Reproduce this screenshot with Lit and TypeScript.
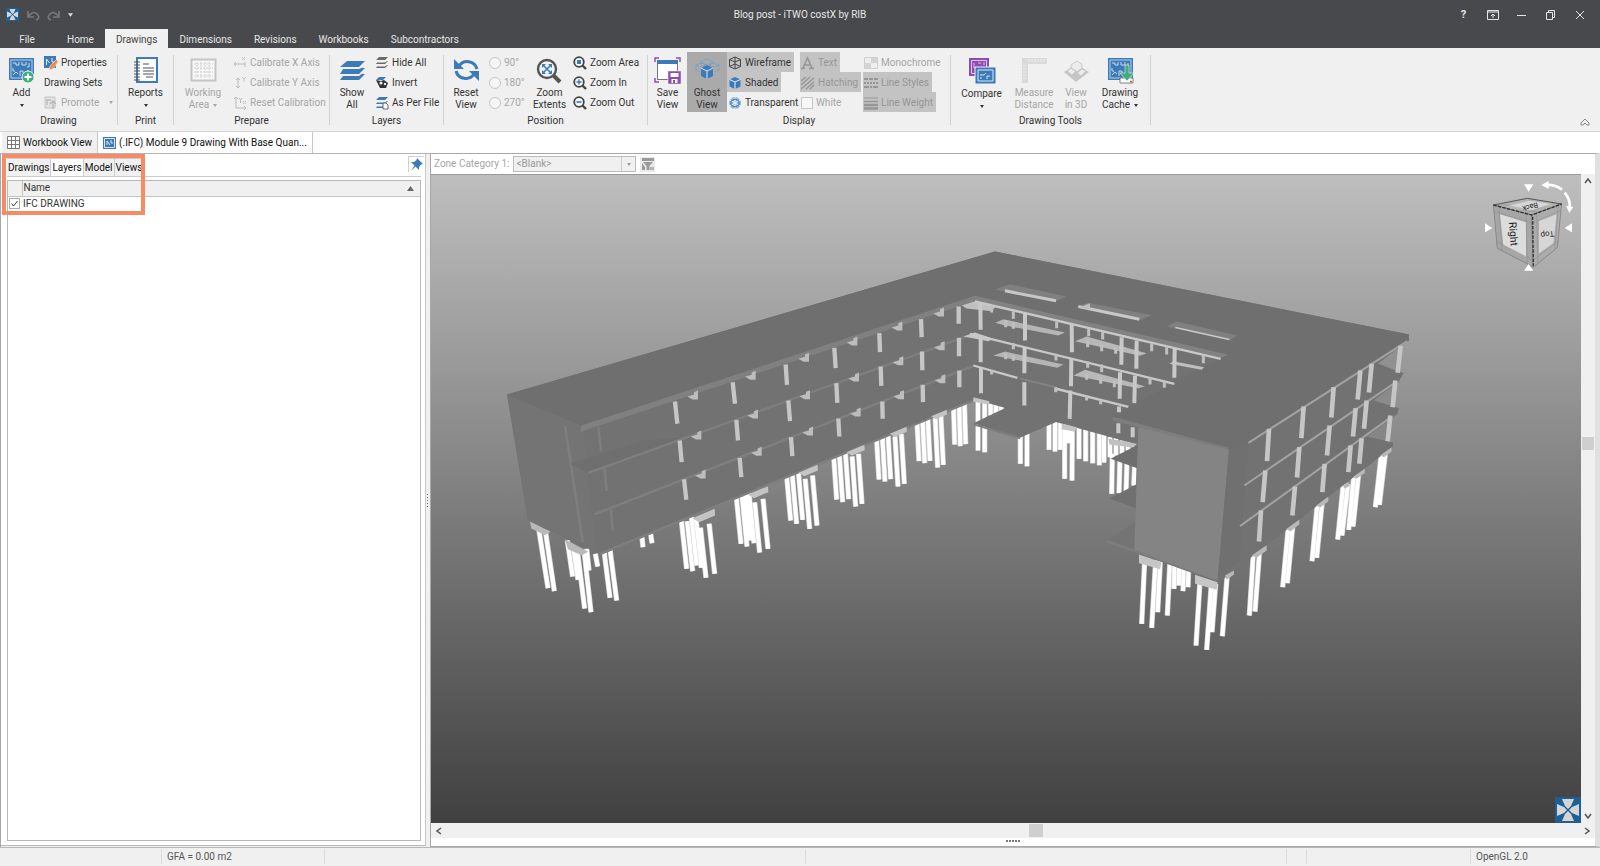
import { LitElement, html, svg, css } from "lit";
import { customElement, state } from "lit/decorators.js";
import { classMap } from "lit/directives/class-map.js";

const BLUE = "#3d7ab8";

/* ---------- icons ---------- */
const icon = (size: number, body: unknown, w = size) =>
  html`<svg class="ico" width=${w} height=${size} viewBox="0 0 ${w} ${size}" aria-hidden="true">${body}</svg>`;

const circuit = (c: string) => svg`<rect x="1" y="1" width="25" height="22" fill=${c}/><rect x="3" y="3" width="21" height="18" fill="none" stroke="#b5cfe8" stroke-width="1"/>
  <path d="M5 6h3v2h3V5M14 5v3h4V5M21 6v4h-2M5 11v3h2M5 18l3-3 2 2M12 19v-5h3v2M20 13v4" fill="none" stroke="#c9dcef" stroke-width="1"/>`;

const layers = (c: string) => svg`<path d="M8 1h18l-6 6H1z" fill=${c}/><path d="M4 9L1 14h19l6-6-3-.2L20 9zM4 16l-3 4h19l6-6-3-.2-3 2.200z" fill=${c}/>`;
const layersSm = (c: string) => svg`<path d="M4 1h9l-3 3H1zM2 6.500L1 8h9l3-3h-1l-2 1.500zM2 10.500L1 12h9l3-3h-1l-2 1.500z" fill=${c}/>`;
const lens = (body: unknown) => svg`<circle cx="6" cy="6" r="4.800" fill="#f4f8fc" stroke="#444" stroke-width="1.800"/><path d="M9.500 9.500L13 13" stroke="#444" stroke-width="2.400"/>${body}`;
const cubeSm = (c: string) => svg`<path d="M7 1l5.500 2.500v7L7 13l-5.500-2.500v-7z" fill=${c}/><path d="M1.500 3.500L7 6l5.500-2.500M7 6v7" fill="none" stroke="#e8f0f8" stroke-width="1"/>`;

const I = {
  add: icon(27, svg`${circuit(BLUE)}<circle cx="20" cy="20" r="6" fill="#3fae7c" stroke="#f0f0f0"/><path d="M20 16.500v7M16.500 20h7" stroke="#fff" stroke-width="1.800"/>`),
  reports: icon(27, svg`<rect x="5" y="1" width="20" height="24" fill="#fff" stroke=${BLUE} stroke-width="2"/><path d="M2 5h6M2 8h6M2 11h6M2 14h6M2 17h6M2 20h6M2 23h6" stroke="#555" stroke-width="1"/><path d="M11 7h6M11 11h11M11 14h11M11 17h11M14 20h7" stroke="#8a8a8a" stroke-width="1.300"/>`),
  area: icon(27, svg`<rect x="1.500" y="2.500" width="24" height="21" fill="#f7f7f7" stroke="#c4c4c4" stroke-width="2"/><path d="M4 7h19M4 11h19M4 15h19M4 19h19M7 5v16M11 5v16M15 5v16M19 5v16" stroke="#cfcfcf" stroke-dasharray="2 1"/>`),
  show: icon(27, svg`<g transform="translate(0 3)">${layers(BLUE)}</g>`),
  reset: icon(27, svg`<path d="M6 9a10 10 0 0 1 18 3M21 17a10 10 0 0 1-18-3" fill="none" stroke=${BLUE} stroke-width="3"/><path d="M1 2v10h10zM26 24V14H16z" fill=${BLUE}/>`),
  extents: icon(27, svg`<circle cx="11" cy="12" r="9" fill="#eef4fa" stroke="#555" stroke-width="2.400"/><path d="M17 18l7 7" stroke="#555" stroke-width="4"/><path d="M7 8l8 8M15 8l-8 8" stroke=${BLUE} stroke-width="1.600"/><path d="M6 7h4l-4 4zM16 7v4l-4-4zM6 17v-4l4 4zM16 17h-4l4-4z" fill=${BLUE}/>`),
  save: icon(27, svg`<path d="M1 5V1h4M22 1h4v4M1 21v4h4" fill="none" stroke="#8d4bb3" stroke-width="1.500"/><rect x="3.500" y="4.500" width="20" height="18" fill="#fff" stroke="#777"/><path d="M3 3h21v4H3z" fill=${BLUE}/><path d="M14 14h13v13H14z" fill="#8d4bb3" stroke="#f0f0f0" stroke-width=".5"/><path d="M16.500 16h8v4h-8zM17.500 22h6v4h-6z" fill="#fff"/><path d="M19 23h2v3h-2z" fill="#8d4bb3"/>`),
  ghost: icon(27, svg`<g fill="none" stroke="#6f9fce" stroke-width="1" stroke-dasharray="2 1"><path d="M13 2l7 3-7 3-7-3zM2 8l5-2 5 2-5 2zM15 8l5-2 5 2-5 2zM2 8v5l4 2M25 8v5l-4 2"/></g><path d="M13 8l6 3v8l-6 3-6-3v-8z" fill=${BLUE}/><path d="M7 11l6 3 6-3M13 14v8" stroke="#d9e8f6" fill="none"/>`),
  compare: icon(28, svg`<path d="M1 1h20v18H1z" fill="#8d4bb3"/><path d="M3.500 3.500h15v13h-15zM6 6v5h4M10 6h3M16 5v3" stroke="#dcc6ea" fill="none"/><path d="M7 10h21v17H7z" fill=${BLUE} stroke="#f0f0f0"/><path d="M10 13h15v11H10zM12 18h4l2-2M13 22v-2M19 22v-3h3" stroke="#dce9f5" fill="none"/>`),
  measure: icon(27, svg`<path d="M1 1h25v6H7v19H1z" fill="#dadada"/><path d="M8 2v3M11 2v3M14 2v3M17 2v3M20 2v3M23 2v3M2 9h3M2 12h3M2 15h3M2 18h3M2 21h3" stroke="#f0f0f0"/>`),
  view3d: icon(27, svg`<path d="M1 15l12-8 13 8-13 10z" fill="#c6c6c6"/><path d="M8 8l6-4 5 3v4l-5 4-6-4zM4 14l4-3 5 3-4 4zM14 16l5-4 4 2-5 5z" fill="#ececec" stroke="#c0c0c0" stroke-width=".8"/>`),
  cache: icon(27, svg`${circuit(BLUE)}<path d="M13 21h13v5H13z" fill="#fff" stroke="#666" stroke-width=".8"/><path d="M18 8h4v8h5l-7 8-7-8h5z" fill="#3fae7c" stroke="#f0f0f0" stroke-width=".6"/><path d="M23 24.500h2" stroke="#e0563a" stroke-width="1.500"/>`),
  props: icon(14, svg`<path d="M0 0h12v12H0z" fill=${BLUE}/><path d="M2.500 9V3l3 4M8 2v4h2" stroke="#dce9f5" fill="none"/><path d="M13 3l-7 7-1 4 4-1 5-7z" fill="#f08a4b" stroke="#fff" stroke-width=".5"/>`),
  promote: icon(14, svg`<path d="M1 1h10v11H1z" fill="#e2e2e2" stroke="#c4c4c4"/><path d="M3 9V4h4M9 13V6M6 8l3-3 3 3" stroke="#b8b8b8" fill="none" stroke-width="1.300"/>`),
  calx: icon(14, svg`<path d="M1 8h11M1 8l2-2M1 8l2 2M12 6v5" stroke="#bbb" fill="none"/><path d="M9 1l3 3M12 1L9 4" stroke="#c4c4c4"/>`),
  caly: icon(14, svg`<path d="M5 2v10M3 4l2-2 2 2M3 10l2 2 2-2" stroke="#bbb" fill="none"/><path d="M9 1l2 2 2-2M11 3v3" stroke="#c4c4c4" fill="none"/>`),
  calr: icon(14, svg`<path d="M3 1v11h10M1 3l2-2 2 2M11 10l2 2-2 2M6 2l1.500 2L9 2M7.500 4v3" stroke="#bbb" fill="none"/><path d="M10 5l3 3M13 5l-3 3" stroke="#c4c4c4"/>`),
  hide: icon(14, layersSm("#6a6a6a")),
  invert: icon(14, svg`<path d="M4 1h7l-3 3H1z" fill=${BLUE}/><path d="M1 4l5 1 3-1 4 3-2 5H5L3 8z" fill="#333"/><circle cx="6" cy="7" r="1.600" fill="#eee"/><circle cx="10" cy="8" r="1.200" fill="#eee"/>`),
  perfile: icon(14, svg`${layersSm(BLUE)}<path d="M8 7h3l2 2v4H8z" fill="#fff" stroke="#666"/>`),
  zarea: icon(14, lens(svg`<rect x="4" y="4" width="4" height="4" fill=${BLUE}/>`)),
  zin: icon(14, lens(svg`<path d="M6 3.500v5M3.500 6h5" stroke=${BLUE} stroke-width="1.400"/>`)),
  zout: icon(14, lens(svg`<path d="M3.500 6h5" stroke=${BLUE} stroke-width="1.600"/>`)),
  wire: icon(14, svg`<path d="M7 1l5.500 2.500v7L7 13l-5.500-2.500v-7zM1.500 3.500L7 6l5.500-2.500M7 1v12M1.500 10.500L7 8l5.500 2.500" fill="none" stroke="#444" stroke-width="1"/>`),
  shaded: icon(14, cubeSm(BLUE)),
  transp: icon(14, svg`<circle cx="7" cy="7" r="6" fill="#8fb8dc"/><path d="M7 1v12M2 4l10 6M12 4L2 10" stroke="#eef5fb"/><path d="M7 3l4 2v4l-4 2-4-2V5z" fill="none" stroke=${BLUE}/>`),
  text: icon(14, svg`<path d="M0 12.500h4M8 12.500h5M2 12L6.500 2 11 12M4 9h6" stroke="#969696" stroke-width="1.600" fill="none"/>`),
  hatch: icon(14, svg`<path d="M0 5l5-4M0 9l9-8M0 13L13 2M5 13l8-7M9 13l4-4" stroke="#969696" stroke-width="1.400"/>`),
  mono: icon(14, svg`<path d="M.5 1.500h13v11H.5z" fill="#eee" stroke="#cfcfcf"/><path d="M1 7h6v5H1zM7 2h6v5H7z" fill="#d3d3d3"/>`),
  lstyle: icon(14, svg`<path d="M0 3h14" stroke="#969696" stroke-width="2" stroke-dasharray="4 1"/><path d="M0 7h14" stroke="#969696" stroke-width="2" stroke-dasharray="2 1"/><path d="M0 11h14" stroke="#969696" stroke-width="2" stroke-dasharray="5 1 2 1"/>`),
  lweight: icon(14, svg`<path d="M0 2h14" stroke="#969696"/><path d="M0 5.500h14" stroke="#969696" stroke-width="1.500"/><path d="M0 9h14M0 12.500h14" stroke="#969696" stroke-width="2.400"/>`),
};

const logo = (s: number) => html`<svg width=${s} height=${s} viewBox="0 0 26 26" aria-hidden="true"><rect width="26" height="26" fill="#1f5f92"/>
  <path d="M7 2h12l-3 7-3 3-3-3zM7 24h12l-3-7-3-3-3 3zM2 7v12l7-3 3-3-3-3zM24 7v12l-7-3-3-3 3-3z" fill="#d3d6d9"/></svg>`;

/* ---------- building model ---------- */
type Seg = [number, number, number, number];
const lines = (s: Seg[], color: string, w: number) =>
  svg`<path d=${s.map(([a, b, c, d]) => `M${a} ${b}L${c} ${d}`).join("")} stroke=${color} stroke-width=${w} fill="none"/>`;
const piles = (s: Seg[]) => svg`${lines(s, "#cfcfcf", 16)}${lines(s, "#fff", 12)}`;
const poly = (p: string, c: string) => svg`<polygon points=${p} fill=${c}/>`;

const pileFeet: [number, [number, number][]][] = [
  [0.11, [[590, 985], [608, 992], [620, 975], [634, 982], [648, 1012], [674, 1000]]],
  [0.1, [[753, 910], [771, 918], [780, 900], [792, 908], [809, 936], [834, 925]]],
  [0.09, [[902, 840], [920, 850], [938, 838], [959, 865], [981, 855]]],
  [0.07, [[1040, 777], [1058, 785], [1076, 776], [1097, 798], [1116, 790]]],
  [0.06, [[1167, 717], [1185, 723], [1202, 716], [1224, 738], [1243, 730]]],
  [0.05, [[1287, 662], [1304, 668], [1320, 661], [1343, 681], [1360, 673]]],
  [0.03, [[1394, 612], [1411, 617], [1427, 611]]],
];
const wingPiles: Seg[] = pileFeet.flatMap(([lean, feet]) =>
  feet.map(([x, y]): Seg => [x - lean * 150, y - 150, x, y]));
const endPiles: Seg[] = [
  [147, 870, 174, 1043], [166, 870, 193, 1052], [232, 900, 248, 1008], [250, 920, 264, 1018], [262, 930, 284, 1104], [282, 930, 303, 1115],
  [290, 925, 297, 990], [342, 930, 360, 1072], [359, 920, 380, 1080], [316, 940, 323, 978], [456, 890, 459, 920], [482, 880, 486, 908],
];
const wingColumns: Seg[] = [
  [555, 483, 562, 550], [728, 425, 735, 490], [887, 372, 891, 433], [1033, 322, 1037, 383], [1168, 278, 1170, 335], [1293, 236, 1295, 290], [1406, 198, 1406, 250],
  [569, 600, 575, 665], [739, 538, 744, 600], [895, 480, 900, 542], [1039, 428, 1042, 487], [1172, 378, 1174, 436], [1296, 333, 1297, 389], [1407, 292, 1407, 347],
  [582, 716, 589, 778], [749, 652, 754, 710], [903, 590, 907, 647], [1045, 534, 1048, 588], [1177, 483, 1178, 535], [1298, 433, 1299, 485], [1408, 390, 1408, 440],
];
const brackets: [number, number][] = [
  [612, 465], [785, 406], [945, 352], [1090, 303], [1225, 258], [1350, 216], [622, 585], [792, 522], [948, 464], [1095, 411], [1228, 362], [1352, 317],
  [635, 702], [803, 634], [957, 573], [1100, 516], [1230, 464], [1354, 416],
];
const wingCaps: [number, number, number][] = [[645, 825, 1], [808, 755, 0.9], [958, 690, 0.85], [1100, 629, 0.8], [1228, 574, 0.75], [1350, 522, 0.7]];

const courtPiles: Seg[] = [
  [174, 470, 174, 630], [194, 480, 194, 635], [212, 480, 212, 525], [228, 480, 228, 518], [244, 485, 244, 512], [301, 580, 301, 670], [321, 570, 321, 677],
  [387, 540, 387, 628], [405, 540, 405, 633], [421, 540, 421, 628], [434, 550, 434, 715], [446, 550, 446, 608], [457, 560, 456, 720],
  [477, 560, 477, 655], [497, 560, 497, 662], [518, 570, 518, 668], [538, 570, 538, 674], [552, 580, 552, 666], [570, 590, 570, 650], [588, 590, 588, 645], [606, 600, 606, 640], [624, 600, 624, 630],
  [577, 640, 575, 760], [600, 650, 597, 758], [621, 660, 618, 755], [645, 660, 641, 735],
];
const frontPiles: Seg[] = [
  [674, 960, 665, 1150], [707, 960, 695, 1162], [721, 960, 713, 1115], [750, 960, 742, 1125], [764, 960, 762, 1045], [778, 970, 776, 1035], [791, 970, 789, 1052], [806, 980, 804, 1040],
  [840, 1020, 828, 1215], [874, 1030, 860, 1228], [887, 1030, 876, 1175], [922, 1000, 907, 1187], [1000, 940, 988, 1125], [1018, 940, 1005, 1113],
  [1105, 860, 1088, 1040], [1118, 860, 1102, 1028], [1192, 790, 1176, 962], [1206, 790, 1190, 952], [1270, 730, 1253, 897], [1284, 730, 1266, 885],
  [1302, 700, 1286, 868], [1316, 700, 1299, 858], [1384, 640, 1366, 800], [1396, 640, 1378, 793],
];
const courtColumns: Seg[] = [
  [181, 190, 182, 268], [315, 220, 315, 300], [455, 250, 456, 335], [605, 290, 604, 373], [650, 300, 649, 385], [764, 325, 763, 412],
  [182, 285, 182, 365], [314, 320, 313, 398], [454, 355, 453, 437], [600, 395, 599, 475], [645, 405, 643, 488],
  [183, 380, 183, 458], [313, 425, 313, 495], [451, 450, 449, 535], [597, 498, 597, 515], [595, 548, 595, 578], [638, 560, 638, 590],
];
const stubs: Seg[] = [
  [215, 195, 215, 216], [280, 212, 280, 235], [410, 243, 410, 263], [506, 265, 506, 287], [548, 275, 548, 297], [695, 308, 695, 332], [740, 320, 740, 342], [850, 344, 850, 368],
  [257, 240, 257, 260], [280, 245, 280, 265], [503, 300, 503, 320], [545, 312, 545, 332], [587, 320, 587, 340], [280, 308, 280, 326], [408, 340, 408, 360], [503, 362, 503, 382], [545, 372, 545, 395],
  [690, 412, 690, 432], [733, 422, 733, 442], [257, 338, 257, 356], [280, 344, 280, 361], [500, 400, 500, 418], [542, 410, 542, 430], [583, 422, 583, 440], [215, 388, 215, 402], [407, 440, 407, 455], [500, 465, 500, 480], [542, 478, 542, 491],
];
const sideColumns: Seg[] = [
  [1047, 565, 1041, 662], [1151, 498, 1144, 593], [1241, 440, 1234, 531], [1321, 390, 1313, 477], [1355, 370, 1347, 456], [1442, 316, 1433, 397],
  [1036, 690, 1028, 785], [1138, 620, 1131, 711], [1229, 555, 1221, 645], [1307, 503, 1299, 588], [1340, 480, 1332, 565], [1426, 420, 1418, 500],
  [1023, 810, 1017, 903], [1125, 738, 1117, 825], [1214, 670, 1207, 755], [1292, 615, 1285, 695], [1325, 593, 1318, 670], [1411, 525, 1403, 602],
];
const sideCaps = ["915,1005 942,990 942,1002 920,1018", "995,945 1040,914 1040,930 1010,952", "1098,866 1138,837 1138,852 1112,872", "1188,796 1225,768 1225,782 1202,800", "1268,736 1285,724 1290,736 1275,744", "1298,710 1335,684 1334,698 1310,714", "1380,645 1415,620 1414,634 1392,650"];

const building = () => svg`
  <g transform="translate(490 240) scale(.333333)">
    ${piles(wingPiles)}${piles(endPiles)}
  </g>
  <g transform="translate(920 240) scale(.333333)">
    ${piles(courtPiles)}${piles(frontPiles)}
    ${poly("1370,370 1445,320 1432,398 1365,384", "#919191")}
    ${poly("1350,475 1428,425 1418,500 1350,486", "#8b8b8b")}
    ${poly("1340,580 1412,530 1403,600 1335,586", "#868686")}
  </g>
  ${poly("507,394 995,251 1409,334 1409,340 1378,363 1403,373 1399,381 1372,401 1399,408 1397,414 1367,436 1393,442 1393,446 1219,582 1135,552 1137,444 975,399 602,554 597,552 583,546 528,520", "#727272")}
  ${poly("507,394 995,251 1409,334 1409,340 1248,442 1229,449 1112,418 1112,415 1228,354 975,296 583,426", "#6f6f6f")}
  ${poly("507,394 583,426 596,550 528,520", "#747474")}
  <g transform="translate(490 240) scale(.333333)">
    ${lines([[225, 555, 278, 905], [325, 560, 333, 632], [343, 680, 350, 752], [362, 800, 368, 870]], "#7e7e7e", 8)}
    ${poly("240,670 460,600 590,590 290,697", "#6f6f6f")}
    ${poly("272,556 1455,166 1455,182 272,574", "#808080")}
    ${lines([[295, 697, 1450, 280], [312, 822, 1450, 376], [330, 940, 1450, 480]], "#7f7f7f", 7)}
    ${lines(wingColumns, "#c6c6c6", 13)}
    ${brackets.map(([x, y]) => poly(`${x - 20},${y + 3} ${x},${y - 3} ${x},${y - 10} ${x + 12},${y - 15} ${x + 12},${y + 12} ${x - 4},${y + 12}`, "#bdbdbd"))}
    ${wingCaps.map(([x, y, k]) => poly(`${x - 38 * k},${y + 8 * k} ${x + 29 * k},${y - 20 * k} ${x + 30 * k},${y} ${x - 18 * k},${y + 20 * k}`, "#c4c4c4"))}
    ${poly("120,843 182,874 165,884 124,864", "#b8b8b8")}
    ${poly("225,896 295,934 275,944 234,926", "#b8b8b8")}
  </g>
  <g transform="translate(920 240) scale(.333333)">
    ${poly("225,147 270,131 440,168 405,184", "#808080")}${poly("467,200 505,187 695,224 658,240", "#808080")}${poly("740,258 770,243 952,285 930,300", "#808080")}
    ${lines([[255, 151, 408, 181], [475, 198, 658, 236]], "#c8c8c8", 9)}${lines([[766, 261, 928, 297]], "#c8c8c8", 4)}
    ${poly("475,202 510,188 510,206", "#bdbdbd")}
    ${poly("165,166 925,343 905,352 165,180", "#828282")}
    ${poly("225,247 250,236 435,276 415,285 255,255", "#b5b5b5")}${poly("465,302 500,288 680,338 660,346", "#b8b8b8")}${poly("748,370 760,362 852,380 845,388", "#c0c0c0")}
    ${poly("220,345 255,333 430,372 412,382", "#b5b5b5")}${poly("460,405 495,388 675,437 655,443", "#b8b8b8")}
    ${poly("125,195 165,182 225,200 215,212 140,204", "#c0c0c0")}${poly("130,288 165,276 220,295 205,302", "#c6c6c6")}
    ${lines([[165, 183, 902, 355], [150, 280, 763, 430], [160, 375, 292, 412], [405, 444, 625, 499]], "#c9c9c9", 7)}
    ${lines([[300, 414, 405, 440]], "#858585", 5)}
    ${lines(stubs, "#c0c0c0", 9)}${lines(courtColumns, "#c9c9c9", 12)}
    ${poly("160,470 208,482 206,492 160,484", "#c4c4c4")}${poly("425,549 470,560 465,574 425,566", "#c4c4c4")}${poly("565,594 650,610 640,622 568,612", "#c0c0c0")}
    ${poly("160,548 270,496 412,543 300,592", "#727272")}${poly("160,548 300,588 300,596 160,554", "#7d7d7d")}
    ${poly("572,655 660,610 660,686", "#6e6e6e")}${poly("568,774 660,726 660,808", "#707070")}${poly("560,900 660,836 660,936 560,906", "#747474")}
    ${lines([[560, 902, 890, 1016]], "#7d7d7d", 8)}
    ${poly("577,528 925,622 925,634 577,540", "#7d7d7d")}
    ${poly("655,560 927,628 893,1020 643,928", "#848484")}${poly("927,628 985,605 958,960 893,1022", "#707070")}
    ${lines([[985, 607, 1462, 302], [973, 735, 1420, 430], [960, 857, 1410, 532]], "#a2a2a2", 6)}
    ${poly("1370,372 1452,398 1420,425 1370,395", "#727272")}${poly("1355,478 1437,503 1408,528 1355,498", "#727272")}
    ${lines(sideColumns, "#c6c6c6", 14)}
    ${sideCaps.map((p) => poly(p, "#b8b8b8"))}
    ${poly("657,942 725,965 720,986 657,968", "#c6c6c6")}${poly("825,1003 893,1025 890,1048 825,1030", "#c6c6c6")}
  </g>`;

const viewCube = () => html`<svg class="cube" width="100" height="100" viewBox="0 0 300 300" role="img" aria-label="View cube">
  <g transform="translate(-120 -40)">
    <path d="M160 130L262 110 365 127 275 160z" fill="#b2b2b2" stroke="#555" stroke-width="3"/>
    <path d="M160 130L275 160 280 316 172 260z" fill="#a6a6a6" stroke="#777" stroke-width="2"/>
    <path d="M275 160L365 127 352 258 280 316z" fill="#acacac" stroke="#777" stroke-width="2"/>
    <path d="M202 133L268 117 340 128 268 148z" fill="#d6d6d6"/>
    <path d="M180 158L258 182 258 286 190 250z" fill="#dcdcdc"/><path d="M297 178L350 158 340 245 297 275z" fill="#d6d6d6"/>
    <path d="M163 150L277 184 362 146M170 240L280 296 354 238M176 134L186 266M258 158L262 306M290 156L294 304M355 130L344 262M180 126L292 152M345 124L255 154" fill="none" stroke="#8a8a8a" stroke-width="1.500"/>
    <path d="M160 130L275 160 365 127M278 165L280 312" stroke="#333" stroke-width="4" stroke-dasharray="10 4" fill="none"/>
    <path d="M252 68h28l-14 22zM252 327h28l-14-20zM135 185v27l22-13zM396 185v27l-22-13z" fill="#fff"/>
    <path d="M366 84Q345 68 318 70M374 93Q392 115 389 138" fill="none" stroke="#fff" stroke-width="8"/>
    <path d="M304 70l22-12v24zM378 132l22 4-12 18z" fill="#fff"/>
    <text x="207" y="182" font-size="31" fill="#222" transform="rotate(86 207 182)">Right</text>
    <text x="341" y="207" font-size="24" fill="#222" transform="rotate(172 341 207)">Top</text>
    <text x="292" y="122" font-size="22" fill="#222" transform="rotate(165 292 122)">Back</text>
  </g></svg>`;

/* ---------- ribbon parts ---------- */
const big = (ic: unknown, a: string, b: string | null, o: { off?: boolean; on?: boolean; caret?: boolean } = {}) => html`
  <button class=${classMap({ big: true, on: !!o.on })} ?disabled=${o.off}>
    ${ic}<span>${a}</span><span>${b ?? ""}${o.caret ? html`<i class=${classMap({ caret: true, gap: !!b })}></i>` : ""}</span>
  </button>`;
const row = (ic: unknown, t: string, o: { off?: boolean; on?: boolean; caret?: boolean } = {}) => html`
  <button class=${classMap({ row: true, on: !!o.on })} ?disabled=${o.off}>${ic}<span>${t}</span>${o.caret ? html`<i class="caret far"></i>` : ""}</button>`;
const group = (name: string, cls: string, body: unknown) => html`
  <section class="group ${cls}" aria-label=${name}><div class="items">${body}</div><h2>${name}</h2></section>`;

@customElement("app-root")
export class AppRoot extends LitElement {
  @state() private tab = "Drawings";
  @state() private panel = "Layers";

  static styles = css`
    :host { display: flex; flex-direction: column; min-height: 100vh; background: #f0f0f0; color: #333;
      font: 10px/12px Roboto, "Open Sans", sans-serif; }
    * { box-sizing: border-box; }
    button, select, input { font: inherit; color: inherit; margin: 0; padding: 0; border: 0; background: none; border-radius: 0; }
    svg { display: block; flex: none; }
    h1, h2 { margin: 0; font: inherit; }
    .title { display: grid; grid-template-columns: 1fr auto 1fr; align-items: center; height: 29px; background: #48494c; color: #e6e6e6; }
    .quick { display: flex; align-items: center; gap: 7px; padding-left: 6px; }
    .win { display: flex; justify-content: flex-end; padding-right: 6px; }
    .win button { width: 29px; height: 24px; display: grid; place-items: center; font-weight: 700; font-size: 11px; }
    .tabs { display: flex; height: 19px; background: #48494c; color: #e6e6e6; }
    .tabs button { padding: 2px 11px 0; }
    .tabs .file { width: 54px; margin-right: 2px; }
    .tabs .sel { background: #f0f0f0; color: #444; }
    .ribbon { display: flex; position: relative; height: 84px; border-bottom: 1px solid #d4d4d4; background: #f0f0f0; }
    .group { display: flex; flex-direction: column; padding: 4px 1px 0 0;
      background: linear-gradient(#d2d2d2, #d2d2d2) right 7px / 1px 70px no-repeat; }
    .items { display: grid; height: 60px; }
    .group h2 { text-align: center; line-height: 18px; }
    .drawing { width: 118px; } .drawing .items { grid-template-columns: 43px 1fr; }
    .print { width: 56px; }
    .prepare { width: 156px; } .prepare .items { grid-template-columns: 58px 1fr; }
    .layers { width: 114px; } .layers .items { grid-template-columns: 44px 1fr; }
    .position { width: 204px; } .position .items { grid-template-columns: 44px 39px 45px 1fr; }
    .display { width: 303px; } .display .items { grid-template-columns: 39px 40px 73px 63px 1fr; }
    .tools { width: 200px; } .tools .items { grid-template-columns: 61px 44px 40px 48px; }
    .col { display: flex; flex-direction: column; align-items: flex-start; }
    .big { display: flex; flex-direction: column; align-items: center; padding-top: 5px; line-height: 12px; white-space: nowrap; }
    .big .ico { margin-bottom: 3px; }
    .big.on { background: #aaa; }
    .row { display: flex; align-items: center; gap: 3px; height: 20px; padding: 1px 3px 0 1px; white-space: nowrap; }
    .row.on { background: #c3c3c3; }
    button:disabled, .off { color: #a6a6a6; }
    .row.on:disabled { color: #969696; }
    .caret { display: inline-block; vertical-align: middle; border: 2px solid transparent; border-top: 3px solid currentColor; border-bottom: 0; }
    .caret.gap { margin-left: 4px; } .caret.far { margin-left: 7px; }
    input[type="radio"], input[type="checkbox"] { appearance: none; border: 1px solid #c6c6c6; background: #f6f6f6; width: 12px; height: 12px; flex: none; }
    input[type="radio"] { border-radius: 50%; }
    .collapse { position: absolute; right: 10px; bottom: 4px; }
    .docs { display: flex; align-items: stretch; height: 21px; padding-left: 2px; background: #fff; }
    .docs button { display: flex; align-items: center; gap: 3px; padding: 0 5px; border-right: 1px solid #c8c8c8; background: #f0f0f0; color: #111; }
    .docs .sel { background: #fff; }
    .work { flex: 1; display: grid; grid-template-columns: 430px minmax(0, 1fr); }
    .side { display: grid; grid-template-columns: minmax(0, 1fr) 3px; padding: 0 1px 1px 0; border-top: 1px solid #b4b4b4; border-left: 1px solid #a8a8a8; }
    .pane { display: flex; flex-direction: column; padding: 0 4px 4px 6px; border-bottom: 1px solid #b8b8b8; border-right: 1px solid #c8c8c8; background: #fff; }
    .grip { align-self: center; width: 3px; height: 13px; background: repeating-linear-gradient(#666 0 1px, transparent 1px 3px) center / 1px 100% no-repeat; }
    .head { display: flex; justify-content: space-between; height: 23px; margin-bottom: 3px; border-bottom: 1px solid #ccc; }
    .ptabs { display: flex; padding-top: 4px; }
    .ptabs button { padding: 0 1px; border-right: 1px solid #ccc; border-top: 1px solid #ccc; background: #f0f0f0; color: #111; white-space: nowrap; }
    .ptabs .sel { background: #fff; }
    .pin { display: grid; place-items: center; width: 16px; height: 16px; margin: 2px -3px 0 0; border: 1px solid #d0d0d0; border-width: 1px 0 0 1px; }
    .gridbox { flex: 1; border: 1px solid #b8b8b8; background: #fff; }
    table { width: 100%; border-collapse: collapse; }
    th { height: 15px; padding: 0 0 0 1px; background: #f0f0f0; border: 1px solid #c4c4c4; border-top: 0; font-weight: 400; text-align: left; }
    th div { display: flex; justify-content: space-between; align-items: center; padding-right: 6px; }
    th:first-child { width: 14px; border-left: 0; } th:last-child { border-right: 0; }
    td { height: 15px; padding: 0 0 0 1px; }
    td input[type="checkbox"] { display: block; width: 11px; height: 11px; border-color: #aaa; }
    td input:checked { background: #fff url('data:image/svg+xml,<svg xmlns="http://www.w3.org/2000/svg" viewBox="0 0 9 9"><path d="M1.500 4.500l2 2.500L7.500 2" fill="none" stroke="%23444"/></svg>') center / 9px no-repeat; }
    .mark { position: absolute; left: 2px; top: 154px; width: 143px; height: 61px; border: 4px solid #f68b66; pointer-events: none; }
    .view { display: grid; grid-template: 20px minmax(0, 1fr) 15px 8px / minmax(0, 1fr) 14px; border: 1px solid #a8a8a8; border-width: 1px 5px 1px 1px; border-right-color: #e0e0e0; background: #fff; }
    .zone { grid-column: 1 / 3; display: flex; align-items: center; gap: 4px; padding-left: 3px; color: #a6a6a6; }
    .zone select { width: 123px; height: 16px; padding-left: 2px; border: 1px solid #bcbcbc; appearance: none; color: #999;
      background: #f0f0f0 linear-gradient(#ccc, #ccc) right 13px top / 1px 100% no-repeat; opacity: 1; }
    .pick { position: relative; display: flex; align-items: center; }
    .pick i { position: absolute; right: 5px; top: 7px; color: #999; }
    .zone button { display: grid; place-items: center; width: 15px; height: 15px; background: #eaeaea; }
    .stage { position: relative; min-height: 300px; background: linear-gradient(#bebebe, #404040); border-top: 1px solid #999; overflow: hidden; }
    .scene { position: absolute; inset: 0; width: 100%; height: 100%; }
    .cube { position: absolute; right: 1px; top: 0; }
    .corner { position: absolute; right: 0; bottom: 0; }
    .bar { display: flex; align-items: center; background: #f0f0f0; }
    .bar.v { flex-direction: column; padding: 3px 0; } .bar.h { grid-column: 1 / 3; padding: 0 4px; }
    .bar::before, .bar::after { content: ""; }
    .bar button:first-child { order: -1; } .bar i { order: 1; } .bar button:last-child { order: 3; }
    .bar::before { order: 0; } .bar::after { order: 2; }
    .bar.v::before { flex: 41; } .bar.v::after { flex: 59; }
    .bar.h::before { flex: 52; } .bar.h::after { flex: 48; }
    .bar i { width: 12px; height: 13px; background: #cfcfcf; } .bar.h i { width: 14px; }
    .dots { grid-column: 1 / 3; justify-self: center; width: 15px; height: 2px; margin-top: 2px; background: repeating-linear-gradient(90deg, #777 0 2px, transparent 2px 3px); }
    .status { display: grid; grid-template-columns: 162px 163px 481px 1fr 20px 164px 129px; height: 19px; border-top: 1px solid #b8b8b8; color: #555; }
    .status span { margin: 1px 0 3px; padding-left: 5px; line-height: 15px; border-right: 1px solid #dcdcdc; }
    .status span:last-child { border: 0; }
  `;

  private chevron(d: string, label: string) {
    return html`<button aria-label=${label}><svg width="8" height="8" viewBox="0 0 8 8"><path d=${d} fill="none" stroke="#555" stroke-width="1.500"/></svg></button>`;
  }

  render() {
    const tabs = ["Home", "Drawings", "Dimensions", "Revisions", "Workbooks", "Subcontractors"];
    return html`
      <header class="title">
        <div class="quick">${logo(13)}
          <button aria-label="Undo"><svg width="14" height="12" viewBox="0 0 14 12"><path d="M2 2v6h6M2 8q5-7 9-3t-1 6" fill="none" stroke="#77787a" stroke-width="1.600"/></svg></button>
          <button aria-label="Redo"><svg width="14" height="12" viewBox="0 0 14 12"><path d="M12 2v6H6M12 8Q7 1 3 5t1 6" fill="none" stroke="#77787a" stroke-width="1.600"/></svg></button>
          <button aria-label="Customize"><svg width="5" height="6" viewBox="0 0 6 6"><path d="M0 1h6L3 5z" fill="#ddd"/></svg></button>
        </div>
        <h1>Blog post - iTWO costX by RIB</h1>
        <div class="win">
          <button>?</button>
          <button aria-label="Ribbon options"><svg width="12" height="10" viewBox="0 0 12 10"><path d="M.5.500h11v9H.5zM.5 2h11M6 8V4M4 6l2-2 2 2" fill="none" stroke="#e6e6e6"/></svg></button>
          <button aria-label="Minimize"><svg width="9" height="9"><path d="M0 5.500h9" stroke="#e6e6e6"/></svg></button>
          <button aria-label="Restore"><svg width="10" height="10"><path d="M.5 2.500h6v7h-6zM2.500 2.500v-2h6v7h-2" fill="none" stroke="#e6e6e6"/></svg></button>
          <button aria-label="Close"><svg width="10" height="10"><path d="M1 1l8 8M9 1L1 9" stroke="#e6e6e6"/></svg></button>
        </div>
      </header>
      <nav class="tabs"><button class="file">File</button>${tabs.map((t) => html`
        <button class=${classMap({ sel: t === this.tab })} @click=${() => (this.tab = t)}>${t}</button>`)}</nav>

      <div class="ribbon">
        ${group("Drawing", "drawing", html`${big(I.add, "Add", null, { caret: true })}
          <div class="col">${row(I.props, "Properties")}${row("", "Drawing Sets")}${row(I.promote, "Promote", { off: true, caret: true })}</div>`)}
        ${group("Print", "print", big(I.reports, "Reports", null, { caret: true }))}
        ${group("Prepare", "prepare", html`${big(I.area, "Working", "Area", { off: true, caret: true })}
          <div class="col">${row(I.calx, "Calibrate X Axis", { off: true })}${row(I.caly, "Calibrate Y Axis", { off: true })}${row(I.calr, "Reset Calibration", { off: true })}</div>`)}
        ${group("Layers", "layers", html`${big(I.show, "Show", "All")}
          <div class="col">${row(I.hide, "Hide All")}${row(I.invert, "Invert")}${row(I.perfile, "As Per File")}</div>`)}
        ${group("Position", "position", html`${big(I.reset, "Reset", "View")}
          <div class="col">${["90°", "180°", "270°"].map((t) => html`<label class="row off"><input type="radio" name="rot" disabled />${t}</label>`)}</div>
          ${big(I.extents, "Zoom", "Extents")}
          <div class="col">${row(I.zarea, "Zoom Area")}${row(I.zin, "Zoom In")}${row(I.zout, "Zoom Out")}</div>`)}
        ${group("Display", "display", html`${big(I.save, "Save", "View")}${big(I.ghost, "Ghost", "View", { on: true })}
          <div class="col">${row(I.wire, "Wireframe", { on: true })}${row(I.shaded, "Shaded", { on: true })}${row(I.transp, "Transparent")}</div>
          <div class="col">${row(I.text, "Text", { off: true, on: true })}${row(I.hatch, "Hatching", { off: true, on: true })}
            <label class="row off"><input type="checkbox" disabled />White</label></div>
          <div class="col">${row(I.mono, "Monochrome", { off: true })}${row(I.lstyle, "Line Styles", { off: true, on: true })}${row(I.lweight, "Line Weight", { off: true, on: true })}</div>`)}
        ${group("Drawing Tools", "tools", html`${big(I.compare, "Compare", null, { caret: true })}${big(I.measure, "Measure", "Distance", { off: true })}
          ${big(I.view3d, "View", "in 3D", { off: true })}${big(I.cache, "Drawing", "Cache", { caret: true })}`)}
        <button class="collapse" aria-label="Collapse ribbon"><svg width="10" height="9" viewBox="0 0 10 9"><path d="M1 5l4-4 4 4v2H7L5 5 3 7H1z" fill="none" stroke="#888"/></svg></button>
      </div>

      <nav class="docs">
        <button><svg width="13" height="13" viewBox="0 0 13 13"><path d="M.5.500h12v12H.5zM4.500.500v12M8.500.500v12M.5 4.500h12M.5 8.500h12" fill="#fff" stroke="#777"/></svg>Workbook View</button>
        <button class="sel"><svg width="13" height="12" viewBox="0 0 13 12"><path d="M0 0h13v12H0z" fill="${BLUE}"/><path d="M1.500 1.500h10v9h-10zM4 8V4l3 4M8 3v3h2" fill="none" stroke="#dce9f5"/></svg>(.IFC) Module 9 Drawing With Base Quan...</button>
      </nav>

      <main class="work">
        <aside class="side">
          <div class="pane">
            <div class="head">
              <div class="ptabs">${["Drawings", "Layers", "Model", "Views"].map((t) => html`
                <button class=${classMap({ sel: t === this.panel })} @click=${() => (this.panel = t)}>${t}</button>`)}</div>
              <button class="pin" aria-label="Pin panel"><svg width="13" height="13" viewBox="0 0 13 13"><path d="M7 0l6 6-2 .5-2 2.500v3L5.500 8.500 1 13l3.500-5.500L1 4h3l2.500-2z" fill="${BLUE}"/></svg></button>
            </div>
            <div class="gridbox">
              <table>
                <thead><tr><th></th><th><div>Name<svg width="7" height="5" viewBox="0 0 7 5"><path d="M0 5l3.500-5L7 5z" fill="#666"/></svg></div></th></tr></thead>
                <tbody><tr><td><input type="checkbox" id="ifc" checked /></td><td><label for="ifc">IFC DRAWING</label></td></tr></tbody>
              </table>
            </div>
          </div>
          <div class="grip"></div>
        </aside>

        <section class="view">
          <div class="zone">
            <label for="zone">Zone Category 1:</label>
            <div class="pick"><select id="zone" disabled><option>&lt;Blank&gt;</option></select><i class="caret"></i></div>
            <button disabled aria-label="Filter"><svg width="12" height="12" viewBox="0 0 12 12"><path d="M0 0h12v3H0zM1 4h10L7.500 8v4h-3V8zM0 5l3 4v3H0z" fill="#9a9a9a"/><path d="M8 9h4v3H8z" fill="#b5b5b5"/></svg></button>
          </div>
          <div class="stage">
            <svg class="scene" viewBox="431 174 1150 649" preserveAspectRatio="xMidYMid slice" role="img" aria-label="Building model">${building()}</svg>
            ${viewCube()}
            <div class="corner">${logo(26)}</div>
          </div>
          <div class="bar v">${this.chevron("M1 6l3-4 3 4", "Scroll up")}<i></i>${this.chevron("M1 2l3 4 3-4", "Scroll down")}</div>
          <div class="bar h">${this.chevron("M6 1L2 4l4 3", "Scroll left")}<i></i>${this.chevron("M2 1l4 3-4 3", "Scroll right")}</div>
          <div class="dots"></div>
        </section>
      </main>
      <div class="mark"></div>
      <footer class="status"><span></span><span>GFA = 0.00 m2</span><span></span><span></span><span></span><span></span><span>OpenGL 2.0</span></footer>
    `;
  }
}
